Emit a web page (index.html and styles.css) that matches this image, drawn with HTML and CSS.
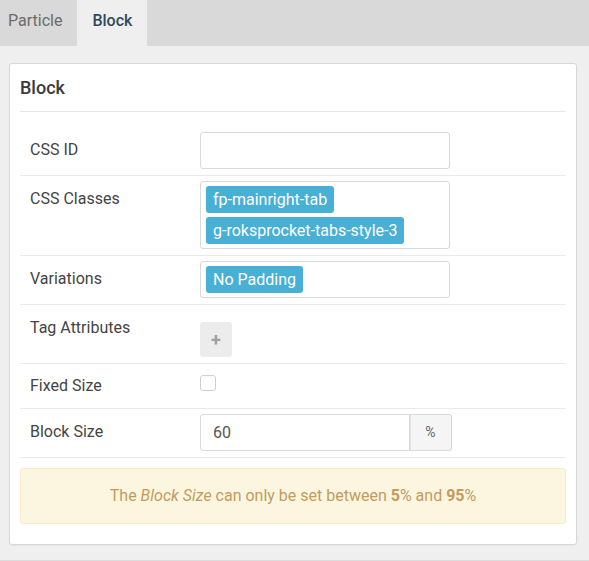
FILE: index.html
```html
<!DOCTYPE html>
<html>
<head>
<meta charset="utf-8">
<link rel="stylesheet" href="styles.css">
</head>
<body>
<div class="tabs">
  <div class="tab tab-first">Particle</div>
  <div class="tab active">Block</div>
</div>
<div class="page">
  <div class="card">
    <h2 class="card-title">Block</h2>
    <div class="form">
      <div class="row">
        <div class="label">CSS ID</div>
        <div class="field"><div class="input"></div></div>
      </div>
      <div class="row">
        <div class="label">CSS Classes</div>
        <div class="field">
          <div class="input tags">
            <span class="tag">fp-mainright-tab</span>
            <span class="tag">g-roksprocket-tabs-style-3</span>
          </div>
        </div>
      </div>
      <div class="row">
        <div class="label">Variations</div>
        <div class="field">
          <div class="input tags"><span class="tag">No Padding</span></div>
        </div>
      </div>
      <div class="row">
        <div class="label">Tag Attributes</div>
        <div class="field"><div class="plus">+</div></div>
      </div>
      <div class="row row-fixed">
        <div class="label">Fixed Size</div>
        <div class="field"><div class="checkbox"></div></div>
      </div>
      <div class="row">
        <div class="label">Block Size</div>
        <div class="field">
          <div class="group">
            <div class="input group-input">60</div>
            <div class="addon">%</div>
          </div>
        </div>
      </div>
    </div>
    <div class="alert">The <em>Block Size</em> can only be set between <strong>5</strong>% and <strong>95</strong>%</div>
  </div>
</div>
</body>
</html>
```
FILE: styles.css
```css
* { box-sizing: border-box; }
html, body { margin: 0; padding: 0; }
body {
  background: #efefef;
  font-family: Roboto, "Liberation Sans", sans-serif;
  font-size: 16px;
  color: #444;
  width: 589px;
  height: 561px;
  overflow: hidden;
}
.tabs {
  display: flex;
  height: 46px;
  background: #d9d9d9;
}
.tab {
  padding: 0 15px;
  line-height: 42px;
  font-size: 16px;
  color: #6b6b6b;
}
.tab-first { padding-left: 8px; }
.tab.active {
  background: #efefef;
  color: #2f4a5c;
  font-weight: 500;
}
.page {
  padding: 17px 12px 15px 9px;
  border-bottom: 1px solid #dcdcdc;
}
.card {
  background: #fff;
  border: 1px solid #d8d8d8;
  border-radius: 3px;
  padding: 0 10px 20px;
  box-shadow: 0 1px 1px rgba(0,0,0,0.04);
}
.card-title {
  margin: 0;
  font-size: 18px;
  font-weight: 500;
  color: #3a3a3a;
  line-height: 23px;
  padding: 12px 0 12px;
  border-bottom: 1px solid #e8e8e8;
}
.form { margin-top: 15px; }
.row {
  display: flex;
  align-items: flex-start;
  padding: 5px 0 6px 10px;
  border-bottom: 1px solid #eaeaea;
}
.label {
  width: 170px;
  flex: none;
  line-height: 35px;
  color: #444;
}
.row-fixed .label { line-height: 33px; }
.field { flex: 1; }
.input {
  width: 250px;
  height: 37px;
  border: 1px solid #d9d9d9;
  border-radius: 3px;
  background: #fff;
}
.tags {
  height: auto;
  display: flex;
  flex-wrap: wrap;
  gap: 4px;
  padding: 4px 5px;
}
.tag {
  display: inline-block;
  height: 27px;
  line-height: 27px;
  padding: 0 7px;
  background: #48afd5;
  color: #fff;
  border-radius: 3px;
  font-size: 16px;
}
.plus {
  margin-top: 12px;
  width: 32px;
  height: 35px;
  background: #ececec;
  border-radius: 3px;
  color: #a0a0a0;
  font-weight: 700;
  font-size: 18px;
  line-height: 35px;
  text-align: center;
}
.checkbox {
  margin-top: 6px;
  width: 16px;
  height: 16px;
  border: 1px solid #cfcfcf;
  border-radius: 3px;
  background: #fff;
}
.group { display: flex; }
.group-input {
  width: 210px;
  border-radius: 3px 0 0 3px;
  padding-left: 12px;
  line-height: 35px;
  color: #555;
}
.addon {
  width: 42px;
  height: 37px;
  border: 1px solid #d9d9d9;
  border-left: 0;
  border-radius: 0 3px 3px 0;
  background: #f5f5f5;
  color: #666;
  font-size: 14px;
  line-height: 35px;
  text-align: center;
  box-shadow: inset 1px 0 0 #e4e4e4;
}
.alert {
  margin-top: 10px;
  background: #fcf6e1;
  border: 1px solid #f8ecc8;
  border-radius: 3px;
  padding: 15px;
  line-height: 24px;
  text-align: center;
  color: #c39c5c;
}
.alert strong { font-weight: 700; }
```
